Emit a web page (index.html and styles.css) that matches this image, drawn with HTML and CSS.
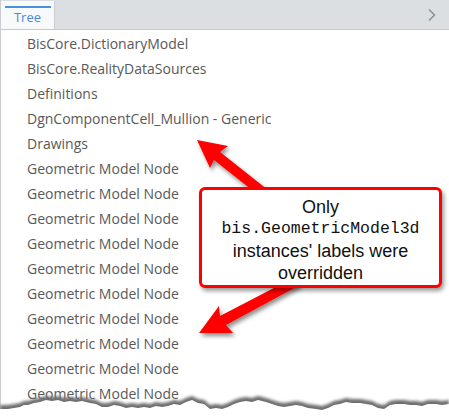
FILE: index.html
```html
<!DOCTYPE html>
<html>
<head>
<meta charset="utf-8">
<link rel="stylesheet" href="styles.css">
</head>
<body>
<div class="panel">
  <div class="tabbar">
    <div class="tab"><span class="tab-label">Tree</span></div>
    <div class="tabfill"></div>
    <div class="chev">
      <svg width="10" height="14" viewBox="0 0 10 14"><path d="M2 1.5 L7.5 7 L2 12.5" fill="none" stroke="#8d939c" stroke-width="1.6"/></svg>
    </div>
  </div>
  <div class="tree">
    <div class="row">BisCore.DictionaryModel</div>
    <div class="row">BisCore.RealityDataSources</div>
    <div class="row">Definitions</div>
    <div class="row">DgnComponentCell_Mullion - Generic</div>
    <div class="row">Drawings</div>
    <div class="row">Geometric Model Node</div>
    <div class="row">Geometric Model Node</div>
    <div class="row">Geometric Model Node</div>
    <div class="row">Geometric Model Node</div>
    <div class="row">Geometric Model Node</div>
    <div class="row">Geometric Model Node</div>
    <div class="row">Geometric Model Node</div>
    <div class="row">Geometric Model Node</div>
    <div class="row">Geometric Model Node</div>
    <div class="row">Geometric Model Node</div>
  </div>
</div>

<svg class="arrows" width="449" height="420" viewBox="0 0 449 420">
  <defs>
    <filter id="sh" x="-20%" y="-20%" width="140%" height="140%">
      <feDropShadow dx="2" dy="3" stdDeviation="2" flood-color="#000" flood-opacity="0.45"/>
    </filter>
  </defs>
  <g filter="url(#sh)" fill="#ff0000">
    <polygon points="197,140 228,146 220,152 268,190 262,198 214,160 210,168"/>
    <polygon points="199,333 233,333 226,325 300,285 295,277 220,316 219,306"/>
  </g>
</svg>

<div class="callout">
  <div>Only</div>
  <div class="mono">bis.GeometricModel3d</div>
  <div>instances' labels were</div>
  <div>overridden</div>
</div>

<svg class="torn" width="449" height="30" viewBox="0 0 449 30">
  <defs>
    <filter id="tblur" x="-5%" y="-80%" width="110%" height="260%">
      <feGaussianBlur stdDeviation="1.6"/>
    </filter>
    <path id="edge" d="M0 40 L0 12 L8 12 L14 11 L20 10 L24 8 L28 8 L34 6 L40 5 L46 3 L52 4 L58 3 L64 5 L70 4 L76 5 L82 4 L90 6 L96 7 L102 10 L108 10 L114 8 L120 9 L126 11 L132 10 L138 11 L144 10 L150 11 L156 9 L162 10 L168 9 L174 7 L180 8 L186 5 L192 3 L198 6 L204 7 L210 12 L216 11 L222 12 L228 10 L234 7 L240 5 L246 4 L252 5 L258 3 L266 5 L272 7 L278 9 L284 10 L290 9 L296 8 L302 9 L308 11 L316 12 L322 13 L328 11 L334 8 L340 7 L346 5 L352 6 L360 6 L366 7 L372 8 L378 11 L384 12 L390 8 L396 7 L404 7 L410 8 L416 8 L422 9 L428 7 L436 7 L442 8 L449 7 L449 40 Z"/>
  </defs>
  <use href="#edge" fill="#6e6e6e" filter="url(#tblur)" transform="translate(0,1)"/>
  <use href="#edge" fill="#fff" transform="translate(0,5)"/>
</svg>
</body>
</html>
```
FILE: styles.css
```css
html, body {
  margin: 0;
  padding: 0;
  background: #fff;
  width: 449px;
  height: 420px;
  overflow: hidden;
  position: relative;
}
.panel {
  width: 449px;
  height: 420px;
  border-left: 1px solid #c9ccd1;
  box-sizing: border-box;
}
.tabbar {
  display: flex;
  height: 30px;
  background: #dcdfe2;
  border-bottom: 1px solid #c5c9ce;
  box-sizing: border-box;
}
.tab {
  width: 54px;
  background: #f8f9fa;
  border-right: 1px solid #c9ccd1;
  display: flex;
  justify-content: center;
  box-sizing: border-box;
  padding-top: 5px;
  margin-top: 1px;
}
.tab-label {
  display: block;
  width: 46px;
  border-top: 2px solid #4a90e2;
  text-align: center;
  font-family: "Open Sans", sans-serif;
  font-size: 13px;
  line-height: 18px;
  color: #4a8ad8;
}
.tabfill { flex: 1; }
.chev {
  width: 26px;
  display: flex;
  align-items: center;
  justify-content: center;
  padding-right: 4px;
}
.tree {
  padding-top: 1px;
}
.row {
  height: 25px;
  line-height: 25px;
  padding-left: 26px;
  font-family: "Open Sans", sans-serif;
  font-size: 14px;
  color: #595959;
  white-space: nowrap;
}
.arrows {
  position: absolute;
  left: 0;
  top: 0;
}
.callout {
  position: absolute;
  left: 199px;
  top: 187px;
  width: 243px;
  height: 101px;
  box-sizing: border-box;
  border: 3px solid #ff0000;
  border-radius: 6px;
  background: #fff;
  box-shadow: 2px 3px 4px rgba(0,0,0,0.4);
  font-family: "Liberation Sans", Arial, sans-serif;
  font-size: 18px;
  line-height: 22px;
  color: #111;
  text-align: center;
  padding-top: 6px;
}
.mono {
  font-family: "Liberation Mono", "DejaVu Sans Mono", monospace;
  font-size: 16.5px;
}
.torn {
  position: absolute;
  left: 0;
  top: 392px;
}
```
